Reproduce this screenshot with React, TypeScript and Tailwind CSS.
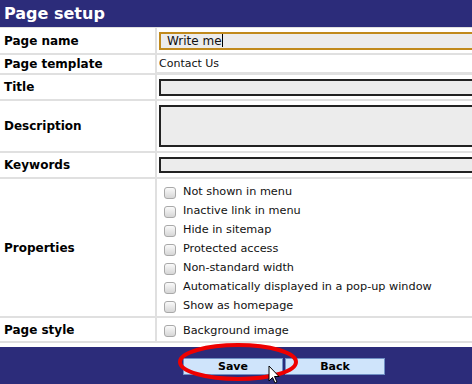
import React from "react";

const PROPERTIES = [
  "Not shown in menu",
  "Inactive link in menu",
  "Hide in sitemap",
  "Protected access",
  "Non-standard width",
  "Automatically displayed in a pop-up window",
  "Show as homepage",
];

function Checkbox() {
  return (
    <span className="inline-block w-[12px] h-[12px] rounded-[3px] border border-[#a9a9a9] bg-gradient-to-b from-[#fafafa] to-[#d6d6d6] shrink-0" />
  );
}

function Label({ children }: { children: React.ReactNode }) {
  return (
    <div className="bg-white flex items-center pl-1 text-[12px] font-bold text-black">
      {children}
    </div>
  );
}

export default function App() {
  return (
    <div
      className="relative w-[472px] h-[384px] overflow-hidden bg-white"
      style={{ fontFamily: '"DejaVu Sans", Verdana, sans-serif' }}
    >
      {/* Header */}
      <div className="h-[27px] bg-[#2c2c7a] text-white text-[16px] font-bold pl-1 flex items-center">
        Page setup
      </div>

      {/* Form table */}
      <div className="grid grid-cols-[155px_560px] gap-[2px] bg-[#e0e0e0] pt-[1px] pb-[2px]">
        <Label>Page name</Label>
        <div className="bg-white h-[25px] pl-[2px] flex items-center">
          <div className="w-[560px] h-[18px] border-2 border-[#c18a1c] bg-[#ececec] text-[12px] text-[#111] pl-[6px] flex items-center">
            Write me<span className="inline-block w-px h-[13px] bg-black" />
          </div>
        </div>

        <Label>Page template</Label>
        <div className="bg-white h-[17px] pl-[2px] pt-[1px] flex items-center text-[11px] text-[#111]">
          Contact Us
        </div>

        <Label>Title</Label>
        <div className="bg-white h-[24px] pl-[2px] flex items-center">
          <div className="w-[560px] h-[17px] border-2 border-[#222] bg-[#ececec]" />
        </div>

        <Label>Description</Label>
        <div className="bg-white h-[50px] pl-[2px] flex items-center">
          <div className="w-[560px] h-[42px] border-2 border-[#222] bg-[#ececec]" />
        </div>

        <Label>Keywords</Label>
        <div className="bg-white h-[24px] pl-[2px] flex items-center">
          <div className="w-[560px] h-[16px] border-2 border-[#222] bg-[#ececec]" />
        </div>

        <Label>Properties</Label>
        <div className="bg-white pt-[4px] pl-[7px] flex flex-col">
          {PROPERTIES.map((p) => (
            <div key={p} className="h-[19px] flex items-center gap-[7px] text-[11.25px] text-[#111]">
              <Checkbox />
              {p}
            </div>
          ))}
        </div>

        <Label>Page style</Label>
        <div className="bg-white h-[23px] pl-[7px] pt-[3px] flex items-center gap-[7px] text-[11.25px] text-[#111]">
          <Checkbox />
          Background image
        </div>
      </div>

      {/* Footer */}
      <div className="mt-[4px] h-[50px] bg-[#2c2c7a] flex justify-center gap-[2px] pt-[11px] pl-[96px]">
        <button className="w-[100px] h-[17px] bg-[#cfe4fb] border border-[#6f8fc4] text-[11px] font-bold text-black leading-none">
          Save
        </button>
        <button className="w-[100px] h-[17px] bg-[#cfe4fb] border border-[#6f8fc4] text-[11px] font-bold text-black leading-none">
          Back
        </button>
      </div>

      {/* Red annotation ellipse */}
      <svg className="absolute left-[176px] top-[340px]" width="124" height="44" viewBox="0 0 124 44">
        <ellipse cx="62" cy="22" rx="58" ry="17" fill="none" stroke="#ee0000" strokeWidth="4" />
      </svg>

      {/* Mouse pointer */}
      <svg className="absolute left-[268px] top-[365px]" width="14" height="20" viewBox="0 0 14 20">
        <path d="M1 1 L1 16 L4.5 12.5 L7 18 L9 17 L6.5 11.5 L11 11.5 Z" fill="#fff" stroke="#000" strokeWidth="1" strokeLinejoin="round" />
      </svg>
    </div>
  );
}
